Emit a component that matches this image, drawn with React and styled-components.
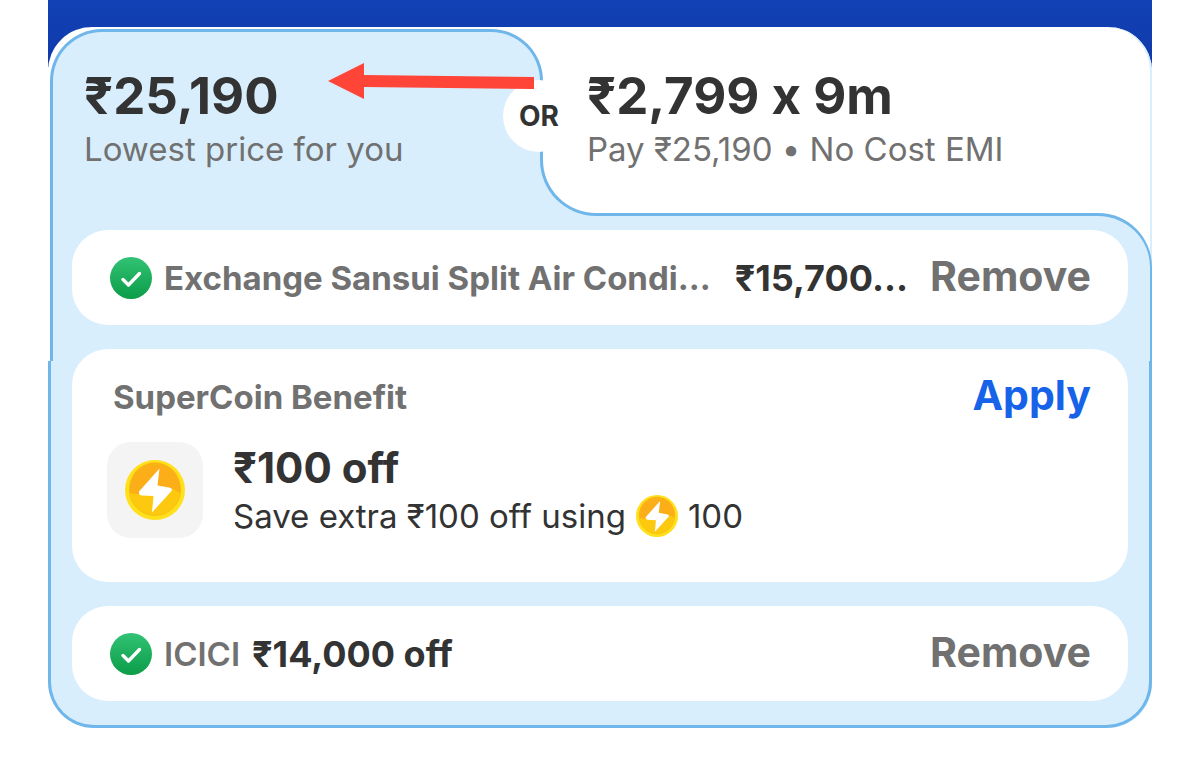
import React from 'react';
import styled, { createGlobalStyle } from 'styled-components';

const GlobalStyle = createGlobalStyle`
  :root {
    --sky: #d9eefc;
    --sky-border: #6fb6ea;
    --dark: #333333;
    --grey: #717171;
    --blue: #1663ea;
  }

  * {
    box-sizing: border-box;
  }

  body {
    margin: 0;
    background: #fff;
    color: var(--dark);
    font-family: Inter, 'Liberation Sans', sans-serif;
    font-variant-ligatures: no-contextual;
  }

  button {
    margin: 0;
    padding: 0;
    border: 0;
    background: none;
    color: inherit;
    font-family: inherit;
    font-variant-ligatures: inherit;
    text-align: left;
    cursor: pointer;
  }
`;

const StyledPage = styled.main`
  margin: 0 48px;
  padding-top: 27px;
  background: linear-gradient(#1141b4, #103aac) no-repeat 0 0 / 100% 67px;
`;

const StyledSheet = styled.section`
  border-radius: 44px;
  background: #fff;
  box-shadow: inset -2px 0 0 var(--sky);
`;

const StyledTabs = styled.div`
  position: relative;
  z-index: 1;
  display: grid;
  grid-template-columns: 495fr 609fr;
  height: 189px;
`;

const StyledTab = styled.button`
  position: relative;
  display: flex;
  flex-direction: column;
  align-items: flex-start;
  padding: 38px 0 0 44px;
  white-space: nowrap;
`;

const StyledSelectedTab = styled(StyledTab)`
  z-index: 1;
  margin: 2px 0 0 2px;
  padding: 33px 0 0 31px;
  border: 3px solid var(--sky-border);
  border-bottom: 0;
  border-radius: 52px 52px 0 0;
  background: var(--sky);

  /* lower half of the right edge belongs to the neighbour's curve */
  &:after {
    content: '';
    position: absolute;
    top: 50%;
    right: -3px;
    bottom: 0;
    width: 3px;
    background: var(--sky);
  }
`;

const StyledEmiTab = styled(StyledTab)`
  &:before,
  &:after {
    content: '';
    position: absolute;
    left: -3px;
    bottom: 0;
    width: 60px;
    height: 60px;
    background: var(--sky);
  }

  &:after {
    z-index: 2;
    height: 94px;
    border: solid var(--sky-border);
    border-width: 0 0 3px 3px;
    border-radius: 0 0 0 56px;
    background: #fff;
  }

  > * {
    position: relative;
    z-index: 3;
  }
`;

const StyledPrice = styled.span`
  font-size: 51px;
  font-weight: 700;
  line-height: 62px;
`;

const StyledCaption = styled.span`
  color: var(--grey);
  font-size: 33px;
  line-height: 44px;
`;

const StyledOr = styled.span`
  position: absolute;
  z-index: 4;
  top: 53px;
  left: calc(100% * 495 / 1104 - 40px);
  display: flex;
  align-items: center;
  justify-content: center;
  width: 72px;
  height: 72px;
  border-radius: 50%;
  background: #fff;
  font-size: 28px;
  font-weight: 700;
  line-height: 32px;
`;

const StyledArrow = styled.svg`
  position: absolute;
  z-index: 5;
  top: 36px;
  left: calc(100% * 495 / 1104 - 215px);
  width: 206px;
  height: 37px;
  fill: #ff4438;
  pointer-events: none;
`;

const StyledPanel = styled.div`
  position: relative;
  display: flex;
  flex-direction: column;
  gap: 24px;
  margin-top: -3px;
  padding: 17px 24px 27px;

  &:before,
  &:after {
    content: '';
    position: absolute;
    left: 2px;
    right: 0;
    top: 0;
    height: 148px;
    border: solid var(--sky-border);
    border-width: 3px 2px 0 3px;
    border-radius: 0 54px 0 0;
    background: var(--sky);
  }

  &:after {
    top: 148px;
    bottom: 0;
    left: 0;
    height: auto;
    border-width: 0 3px 3px;
    border-radius: 0 0 46px 46px;
  }
`;

const StyledCard = styled.article`
  position: relative;
  z-index: 1;
  border-radius: 36px;
  background: #fff;
`;

const StyledOfferRow = styled(StyledCard)`
  display: flex;
  align-items: center;
  height: 95px;
  padding: 0 37px 0 38px;
  white-space: nowrap;

  svg {
    flex: none;
    margin-right: 12px;
  }
`;

const StyledOfferName = styled.span`
  min-width: 0;
  overflow: hidden;
  color: var(--grey);
  font-size: 33px;
  font-weight: ${props => (props.$medium ? 600 : 700)};
  line-height: 44px;
`;

const StyledOfferValue = styled.strong`
  margin-left: ${props => (props.$wide ? 24 : 12)}px;
  font-size: 36px;
  font-weight: 700;
  line-height: 44px;
`;

const StyledAction = styled.button`
  margin-left: auto;
  padding-bottom: 4px;
  color: ${props => (props.$primary ? 'var(--blue)' : 'var(--grey)')};
  font-size: 41px;
  font-weight: 700;
  line-height: 48px;
`;

const StyledBenefit = styled(StyledCard)`
  height: 233px;
  padding: 21px 37px 0 35px;

  header {
    display: flex;
    align-items: center;
    height: 54px;
    padding-left: 6px;
  }

  h2 {
    margin: 0;
    color: var(--grey);
    font-size: 33px;
    font-weight: 700;
    line-height: 44px;
  }
`;

const StyledBenefitBody = styled.div`
  display: flex;
  gap: 30px;
  margin-top: 18px;

  h3 {
    margin: 0;
    font-size: 42px;
    font-weight: 700;
    line-height: 52px;
  }

  p {
    display: flex;
    align-items: center;
    gap: 10px;
    margin: 0;
    font-size: 33px;
    line-height: 44px;
    white-space: nowrap;
  }
`;

const StyledCoinTile = styled.div`
  display: flex;
  align-items: center;
  justify-content: center;
  width: 96px;
  height: 96px;
  border-radius: 24px;
  background: #f4f4f4;
`;

const CheckIcon = () => (
  <svg width="42" height="42" viewBox="0 0 42 42" aria-hidden="true">
    <defs>
      <linearGradient id="check" x1="0" y1="0" x2="0" y2="1">
        <stop offset="0" stopColor="#31c274" />
        <stop offset="1" stopColor="#0b9d48" />
      </linearGradient>
    </defs>
    <circle cx="21" cy="21" r="21" fill="url(#check)" />
    <path
      d="M13 22.5l5.500 5.500L29.500 16.500"
      fill="none"
      stroke="#fff"
      strokeWidth="3.4"
      strokeLinecap="round"
      strokeLinejoin="round"
    />
  </svg>
);

const CoinIcon = ({ size }) => (
  <svg width={size} height={size} viewBox="0 0 60 60" aria-hidden="true">
    <circle cx="30" cy="30" r="30" fill="#ffe01b" />
    <circle cx="30" cy="30" r="25.500" fill="#fdc90f" />
    <path d="M5 33A25.500 25.500 0 1 1 55 33Q43 24 30 30T5 33Z" fill="#fbae17" />
    <path
      d="M34.500 8.500L14 31.500Q13.500 35.500 17 35.500L28.500 36L27 52.500L46.500 31Q48 28 44 27.500L32.500 25.500Z"
      fill="#fff"
    />
    <circle cx="30" cy="30" r="25.500" fill="none" stroke="#f3bb12" strokeWidth="0.8" />
  </svg>
);

const offers = {
  exchange: { name: 'Exchange Sansui Split Air Condi...', value: '₹15,700...' },
  bank: { name: 'ICICI', value: '₹14,000 off' },
};

const App = () => (
  <>
    <GlobalStyle />
    <StyledPage>
      <StyledSheet>
        <StyledTabs>
          <StyledSelectedTab type="button" aria-pressed="true">
            <StyledPrice>₹25,190</StyledPrice>
            <StyledCaption>Lowest price for you</StyledCaption>
          </StyledSelectedTab>
          <StyledEmiTab type="button" aria-pressed="false">
            <StyledPrice>₹2,799 x 9m</StyledPrice>
            <StyledCaption>Pay ₹25,190 • No Cost EMI</StyledCaption>
          </StyledEmiTab>
          <StyledOr>OR</StyledOr>
          <StyledArrow viewBox="0 0 206 37" aria-hidden="true">
            <path d="M0 18L36 0V12L206 14V26L36 24V36Z" />
          </StyledArrow>
        </StyledTabs>

        <StyledPanel>
          <StyledOfferRow>
            <CheckIcon />
            <StyledOfferName>{offers.exchange.name}</StyledOfferName>
            <StyledOfferValue $wide>{offers.exchange.value}</StyledOfferValue>
            <StyledAction type="button">Remove</StyledAction>
          </StyledOfferRow>

          <StyledBenefit>
            <header>
              <h2>SuperCoin Benefit</h2>
              <StyledAction type="button" $primary>
                Apply
              </StyledAction>
            </header>
            <StyledBenefitBody>
              <StyledCoinTile>
                <CoinIcon size={60} />
              </StyledCoinTile>
              <div>
                <h3>₹100 off</h3>
                <p>
                  Save extra ₹100 off using <CoinIcon size={42} /> 100
                </p>
              </div>
            </StyledBenefitBody>
          </StyledBenefit>

          <StyledOfferRow>
            <CheckIcon />
            <StyledOfferName $medium>{offers.bank.name}</StyledOfferName>
            <StyledOfferValue>{offers.bank.value}</StyledOfferValue>
            <StyledAction type="button">Remove</StyledAction>
          </StyledOfferRow>
        </StyledPanel>
      </StyledSheet>
    </StyledPage>
  </>
);

export default App;
